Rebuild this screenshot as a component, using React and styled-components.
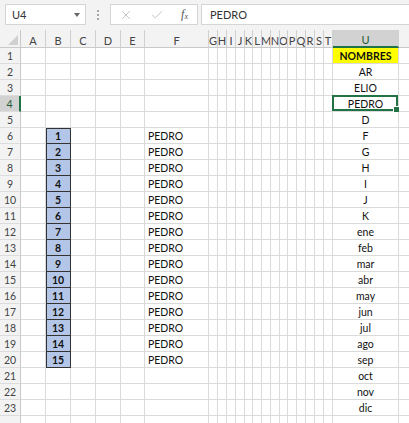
import React from "react";
import styled, { createGlobalStyle } from "styled-components";
import { X, Check } from "lucide-react";

const GlobalStyle = createGlobalStyle`
    html, body {
        margin: 0;
        padding: 0;
        background: #ffffff;
        overflow: hidden;
    }
    body {
        font-family: Lato, "Liberation Sans", sans-serif;
    }
`

const Window = styled.div`
    width: 409px;
    height: 423px;
    overflow: hidden;
    background: #f3f3f3;
`

const FormulaBar = styled.div`
    display: flex;
    align-items: flex-start;
    height: 30px;
    padding: 4px 0 0 5px;
    box-sizing: border-box;
`

const NameBox = styled.div`
    display: flex;
    align-items: center;
    justify-content: space-between;
    width: 81px;
    height: 21px;
    box-sizing: border-box;
    padding: 0 5px 0 6px;
    background: #fff;
    border: 1px solid #d5d5d5;
    font-size: 11px;
    color: #333;
`

const Caret = styled.span`
    width: 0;
    height: 0;
    border-left: 3.5px solid transparent;
    border-right: 3.5px solid transparent;
    border-top: 4px solid #666;
`

const Grip = styled.div`
    display: flex;
    flex-direction: column;
    gap: 2px;
    margin: 6px 11px 0 11px;
    span {
        width: 2px;
        height: 2px;
        background: #a8a8a8;
    }
`

const FxButtons = styled.div`
    display: flex;
    align-items: center;
    justify-content: space-between;
    width: 88px;
    height: 21px;
    box-sizing: border-box;
    padding: 0 9px 0 8px;
    background: #fff;
    border: 1px solid #d5d5d5;
`

const FxLabel = styled.span`
    font-family: "Liberation Serif", serif;
    font-style: italic;
    font-size: 12px;
    color: #555;
    sub {
        font-size: 8px;
        vertical-align: -1px;
    }
`

const FormulaInput = styled.div`
    flex: 1;
    height: 21px;
    margin-left: 3px;
    box-sizing: border-box;
    padding: 0 8px;
    display: flex;
    align-items: center;
    background: #fff;
    border: 1px solid #d5d5d5;
    border-right: none;
    font-size: 11px;
    color: #333;
`

const Sheet = styled.div`
    display: grid;
    grid-template-columns: ${p => p.$cols};
    grid-template-rows: 18px;
    grid-auto-rows: 16px;
    background: #fff;
`

const Corner = styled.div`
    background: #f3f3f3;
    border-right: 1px solid #c9c9c9;
    border-bottom: 1px solid #c9c9c9;
    box-sizing: border-box;
    display: flex;
    align-items: flex-end;
    justify-content: flex-end;
    padding: 0 2px 2px 0;
    &::after {
        content: "";
        width: 0;
        height: 0;
        border-left: 10px solid transparent;
        border-bottom: 10px solid #d0d0d0;
    }
`

const ColHead = styled.div`
    display: flex;
    align-items: center;
    justify-content: center;
    box-sizing: border-box;
    background: ${p => (p.$active ? "#d2d2d2" : "#f3f3f3")};
    border-right: 1px solid #d0d0d0;
    border-bottom: ${p => (p.$active ? "2px solid #217346" : "1px solid #c9c9c9")};
    font-size: 11px;
    color: ${p => (p.$active ? "#1d5a36" : "#444")};
    padding-top: 3px;
    overflow: hidden;
`

const RowHead = styled.div`
    display: flex;
    align-items: center;
    justify-content: center;
    box-sizing: border-box;
    background: ${p => (p.$active ? "#d2d2d2" : "#f3f3f3")};
    border-right: ${p => (p.$active ? "2px solid #217346" : "1px solid #c9c9c9")};
    border-bottom: 1px solid #dcdcdc;
    font-size: 10.5px;
    color: ${p => (p.$active ? "#1d5a36" : "#444")};
`

const Cell = styled.div`
    position: relative;
    display: flex;
    align-items: center;
    justify-content: ${p => (p.$center ? "center" : "flex-start")};
    box-sizing: border-box;
    padding-left: ${p => (p.$center ? "0" : "3px")};
    background: ${p => p.$fill || "#fff"};
    border-right: 1px solid ${p => (p.$boxed ? "#333" : "#dadada")};
    border-bottom: 1px solid ${p => (p.$boxed ? "#333" : "#dadada")};
    box-shadow: ${p => (p.$boxed ? (p.$boxTop ? "inset 1px 1px #333" : "inset 1px 0 #333") : "none")};
    font-size: 10.5px;
    font-weight: ${p => (p.$bold ? 700 : 400)};
    color: #111;
    white-space: nowrap;
`

const Selection = styled.div`
    position: absolute;
    left: -1px;
    top: -1px;
    right: 0;
    bottom: 0;
    border: 2px solid #217346;
    pointer-events: none;
    &::after {
        content: "";
        position: absolute;
        right: -4px;
        bottom: -4px;
        width: 5px;
        height: 5px;
        background: #217346;
        border: 1px solid #fff;
    }
`

const narrow = ["G", "H", "I", "J", "K", "L", "M", "N", "O", "P", "Q", "R", "S", "T"];
const narrowW = [9, 9, 9, 9, 8, 9, 9, 9, 8, 9, 9, 9, 9, 9];

const COLS = [
    { id: "A", w: 25 },
    { id: "B", w: 25 },
    { id: "C", w: 25 },
    { id: "D", w: 25 },
    { id: "E", w: 24 },
    { id: "F", w: 64 },
    ...narrow.map((id, i) => ({ id, w: narrowW[i] })),
    { id: "U", w: 66 },
    { id: "V", w: 40 },
];

const U_VALUES = [
    "NOMBRES", "AR", "ELIO", "PEDRO", "D", "F", "G", "H", "I", "J", "K",
    "ene", "feb", "mar", "abr", "may", "jun", "jul", "ago", "sep", "oct", "nov", "dic",
];

// row 24 only peeks in at the bottom edge
const ROWS = Array.from({ length: 24 }, (_, i) => i + 1);

const renderCell = (col, row) => {
    const key = col + row;
    if (col === "B" && row >= 6 && row <= 20) {
        return (
            <Cell key={key} $center $bold $boxed $boxTop={row === 6} $fill="#b4c6e7">
                {row - 5}
            </Cell>
        );
    }
    if (col === "F" && row >= 6 && row <= 20) {
        return <Cell key={key}>PEDRO</Cell>;
    }
    if (col === "U" && row <= U_VALUES.length) {
        return (
            <Cell key={key} $center $bold={row === 1} $fill={row === 1 ? "#ffff00" : undefined}>
                {U_VALUES[row - 1]}
                {row === 4 && <Selection />}
            </Cell>
        );
    }
    return <Cell key={key} />;
};

const App = () => {
    const template = "21px " + COLS.map(c => c.w + "px").join(" ");

    return (
        <Window>
            <GlobalStyle />
            <FormulaBar>
                <NameBox>
                    <span>U4</span>
                    <Caret />
                </NameBox>
                <Grip><span /><span /><span /></Grip>
                <FxButtons>
                    <X size={14} color="#bdbdbd" strokeWidth={1.5} />
                    <Check size={14} color="#bdbdbd" strokeWidth={1.5} />
                    <FxLabel>f<sub>x</sub></FxLabel>
                </FxButtons>
                <FormulaInput>PEDRO</FormulaInput>
            </FormulaBar>

            <Sheet $cols={template}>
                <Corner />
                {COLS.map(c => (
                    <ColHead key={c.id} $active={c.id === "U"}>
                        {c.id === "V" ? "" : c.id}
                    </ColHead>
                ))}
                {ROWS.map(r => (
                    <React.Fragment key={r}>
                        <RowHead $active={r === 4}>{r < 24 ? r : ""}</RowHead>
                        {COLS.map(c => renderCell(c.id, r))}
                    </React.Fragment>
                ))}
            </Sheet>
        </Window>
    );
};

export default App;
